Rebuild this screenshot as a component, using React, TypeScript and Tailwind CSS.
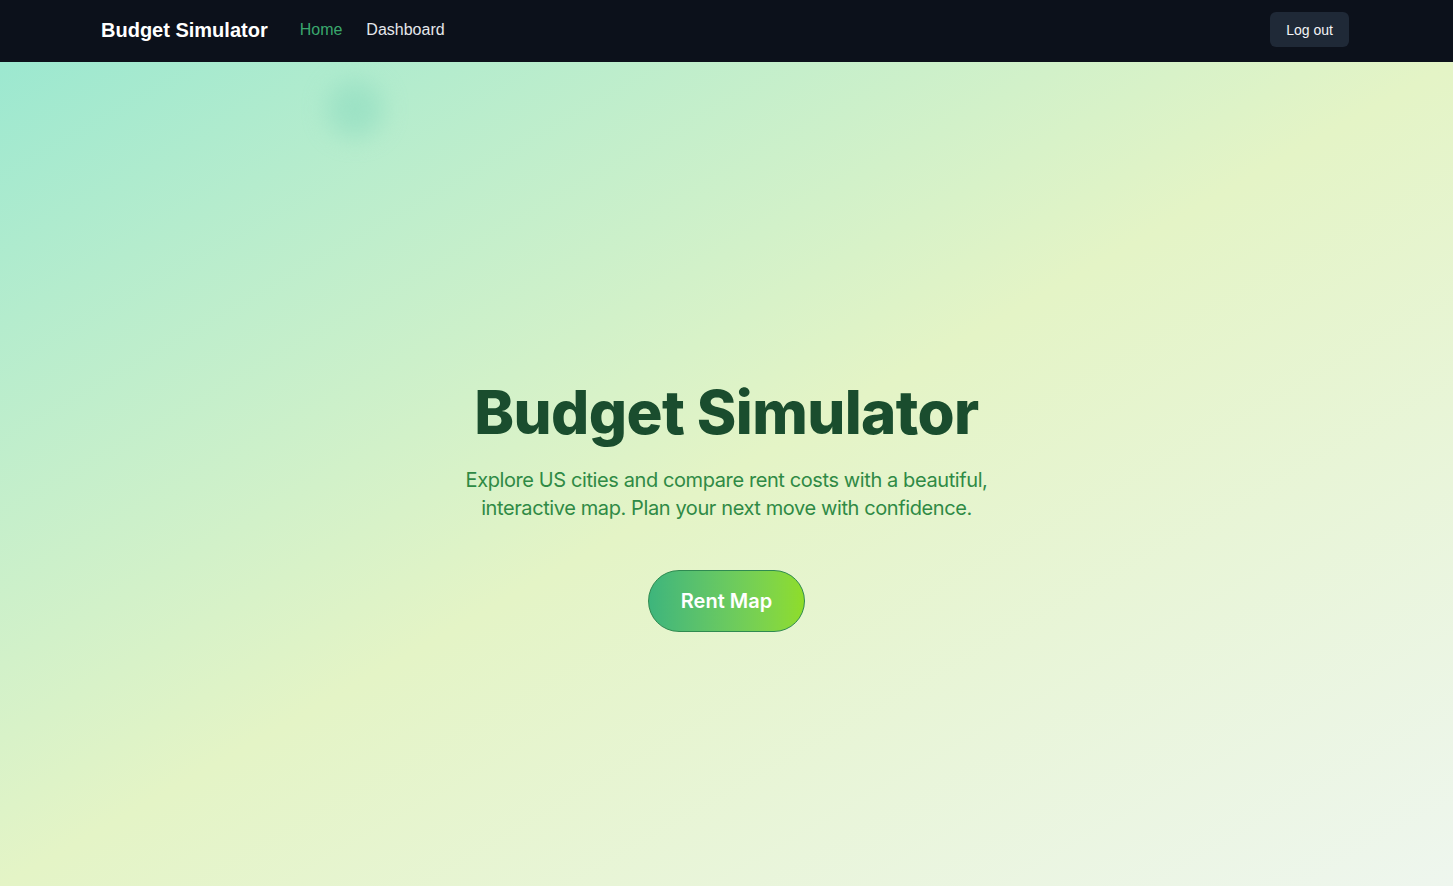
import React from "react";

export default function App() {
  return (
    <div className="min-h-screen flex flex-col font-['Liberation_Sans',Arial,sans-serif]">
      <header className="h-[62px] bg-[#0c111b] shrink-0 pb-[3px]">
        <div className="h-full pl-[101px] pr-[104px] flex items-center justify-between">
          <div className="flex items-center">
            <span className="text-white text-[20px] font-bold">Budget Simulator</span>
            <nav className="flex items-center gap-6 ml-8 text-base">
              <a href="#" className="text-[#3aa76d]">Home</a>
              <a href="#" className="text-gray-200">Dashboard</a>
            </nav>
          </div>
          <button className="bg-[#1f2937] text-gray-100 text-sm px-4 h-[35px] rounded-md">Log out</button>
        </div>
      </header>

      <main className="relative flex-1 overflow-hidden bg-linear-to-br from-[#9ce8d0] via-[#e4f4c6] to-[#eef6ee] font-['Inter',sans-serif]">
        {/* soft blob */}
        <div className="absolute left-[326px] top-[18px] w-[58px] h-[58px] rounded-full bg-[#8fdcc0] opacity-60 blur-md" />

        <div className="flex flex-col items-center pt-[320px] text-center">
          <h1 className="text-6xl font-extrabold tracking-[-0.01em] text-[#1a4d2e]">Budget Simulator</h1>
          <p className="mt-6 max-w-[560px] text-xl leading-7 tracking-[-0.02em] text-[#2f8a45]">
            Explore US cities and compare rent costs with a beautiful, interactive map. Plan your next move with confidence.
          </p>
          <button className="mt-12 rounded-full border border-[#2f8a50] bg-linear-to-r from-[#3db57c] to-[#8fdd28] px-8 py-[16px] text-xl leading-7 font-semibold text-white">
            Rent Map
          </button>
        </div>
      </main>
    </div>
  );
}
